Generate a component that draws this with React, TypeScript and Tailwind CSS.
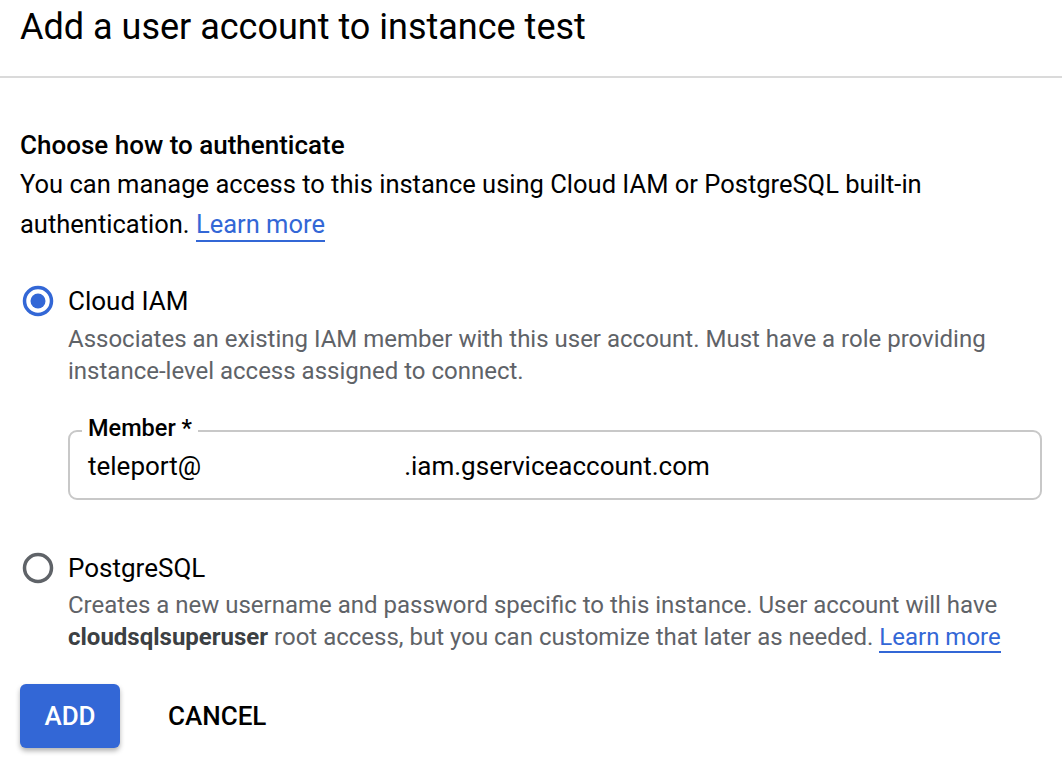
import React from "react";

const Radio: React.FC<{ checked: boolean }> = ({ checked }) => (
  <svg width="32" height="32" viewBox="0 0 32 32" className="shrink-0">
    <circle
      cx="16"
      cy="16"
      r="13.5"
      fill="none"
      stroke={checked ? "#3367d6" : "#5f6368"}
      strokeWidth="3.5"
    />
    {checked && <circle cx="16" cy="16" r="7.5" fill="#3367d6" />}
  </svg>
);

const App: React.FC = () => {
  return (
    <div
      className="w-[1062px] h-[764px] bg-white text-[#202124] overflow-hidden"
      style={{ fontFamily: "Roboto, 'Liberation Sans', sans-serif" }}
    >
      <div className="h-[78px] border-b-2 border-[#dadada] px-5 pt-[5px]">
        <h1 className="text-[36px] leading-[44px] text-black">
          Add a user account to instance test
        </h1>
      </div>

      <div className="px-5 pt-[48px]">
        <h2 className="text-[26px] leading-[38px] font-medium text-black">
          Choose how to authenticate
        </h2>
        <p className="text-[25.5px] leading-[40px] text-black">
          You can manage access to this instance using Cloud IAM or PostgreSQL built-in
          <br />
          authentication.{" "}
          <a className="text-[#3367d6] border-b-2 border-[#3367d6] pb-[1px]">Learn more</a>
        </p>

        <div className="mt-[39px] flex flex-col">
          <div className="flex items-center gap-[14px] h-[36px]">
            <div className="ml-[2px]">
              <Radio checked />
            </div>
            <span className="text-[26px] text-black">Cloud IAM</span>
          </div>
          <p className="ml-12 mt-[4px] text-[24px] leading-[32px] text-[#5f6368]">
            Associates an existing IAM member with this user account. Must have a role providing
            <br />
            instance-level access assigned to connect.
          </p>

          <div className="ml-12 mt-[43px] relative">
            <div className="h-[70px] border-2 border-[#c8c8c8] rounded-[9px] flex items-center px-[18px] pt-[2px]">
              <span className="text-[26px] text-black">teleport@</span>
              <span className="text-[26px] text-black ml-[203px]">.iam.gserviceaccount.com</span>
            </div>
            <span className="absolute left-[14px] -top-[17px] bg-white px-[6px] text-[23.5px] font-medium text-black leading-[30px]">
              Member *
            </span>
          </div>

          <div className="flex items-center gap-[14px] h-[36px] mt-[50px]">
            <div className="ml-[2px]">
              <Radio checked={false} />
            </div>
            <span className="text-[26px] text-black">PostgreSQL</span>
          </div>
          <p className="ml-12 mt-[3px] text-[24px] leading-[32px] text-[#5f6368]">
            Creates a new username and password specific to this instance. User account will have
            <br />
            <span className="font-bold text-[#3c4043]">cloudsqlsuperuser</span> root access, but you can customize that later as needed.{" "}
            <a className="text-[#3367d6] border-b-2 border-[#3367d6]">Learn more</a>
          </p>
        </div>

        <div className="mt-[31px] flex items-center gap-12">
          <button className="w-[100px] h-[64px] rounded-[6px] bg-[#3367d6] text-white text-[26px] font-medium shadow-[0_3px_5px_rgba(0,0,0,0.3)]">
            ADD
          </button>
          <button className="text-[26px] font-medium text-black">CANCEL</button>
        </div>
      </div>
    </div>
  );
};

export default App;
